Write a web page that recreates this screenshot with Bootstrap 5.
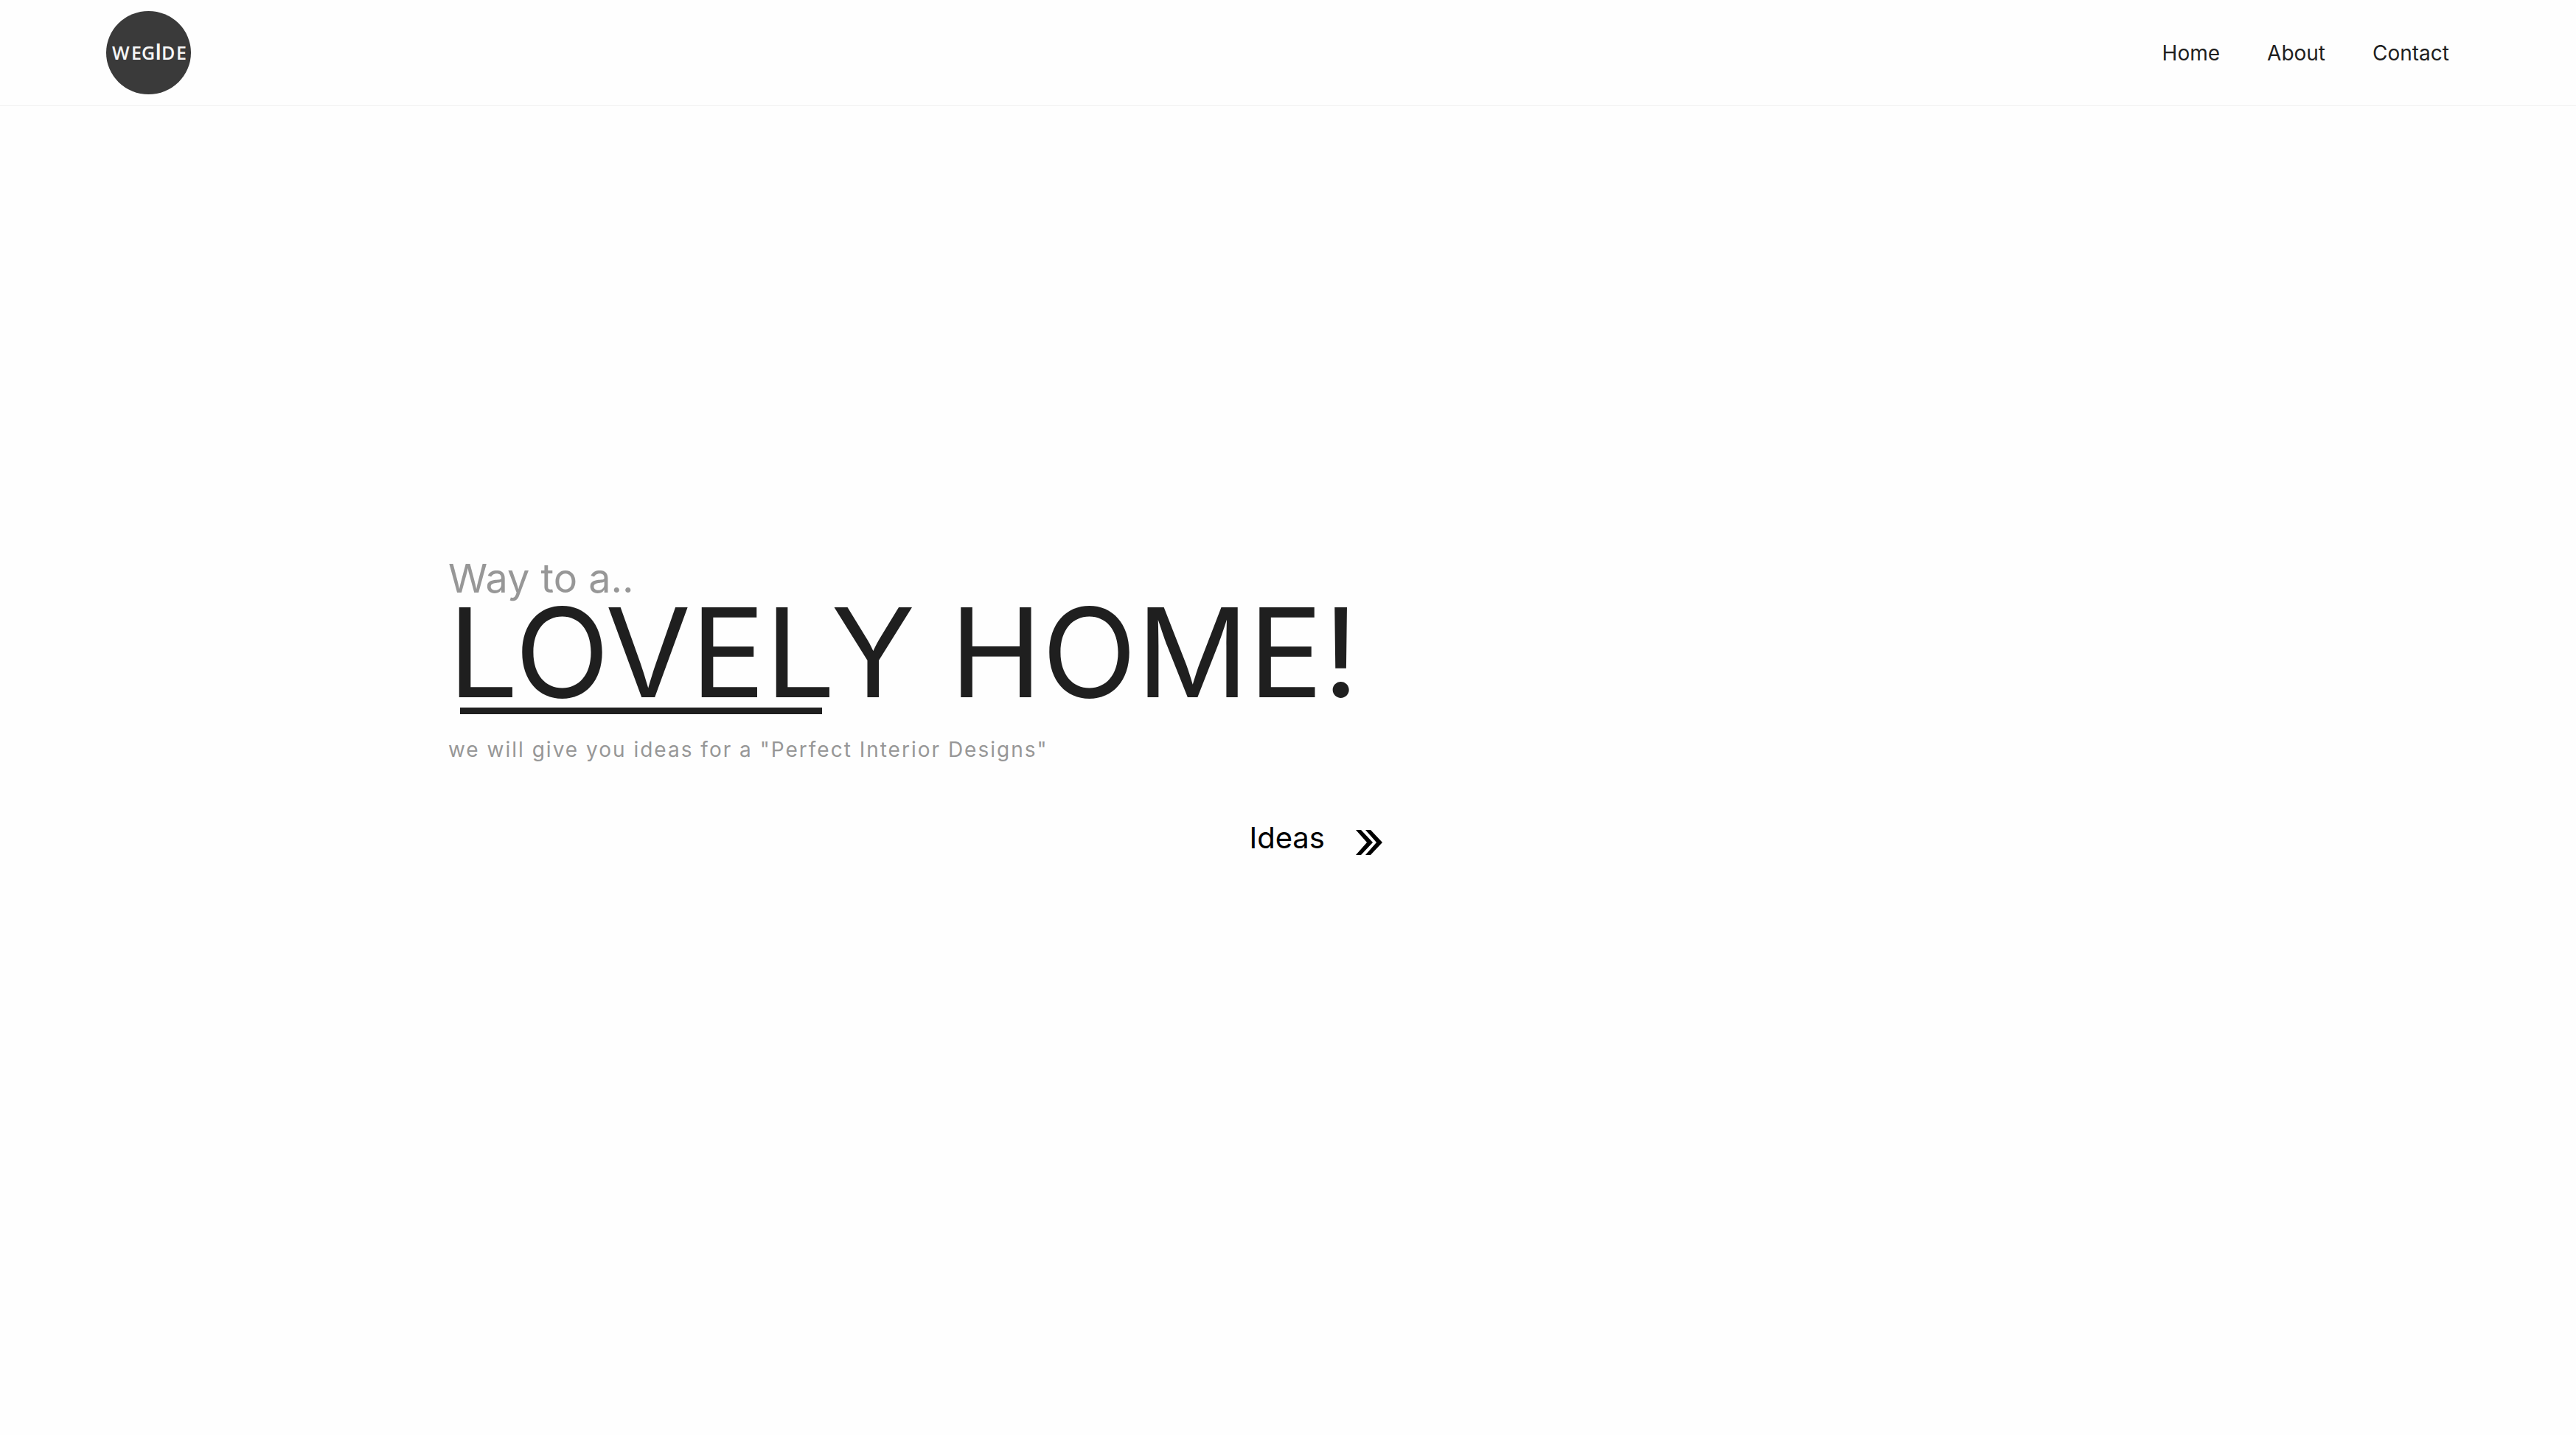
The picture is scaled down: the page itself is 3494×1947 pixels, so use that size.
<!DOCTYPE html>
<html lang="en">
<head>
<meta charset="utf-8">
<meta name="viewport" content="width=device-width, initial-scale=1">
<title>WEGIDE</title>
<link href="https://cdn.jsdelivr.net/npm/bootstrap@5.3.0/dist/css/bootstrap.min.css" rel="stylesheet">
<style>
  body { font-family: Inter, "Liberation Sans", sans-serif; color: #1f1f1f; background: #fefefe; }
  .site-bar { height: 144px; padding: 0 140px 0 144px; background: #fefefe; border-bottom: 1px solid #f0f0f0; }
  .site-bar .nav-link { padding: 0 32px; font-size: 28px; line-height: 40px; color: #1f1f1f; }
  .brand-logo { width: 115px; height: 113px; }
  .brand-logo text { font-family: "Open Sans", sans-serif; font-weight: 600; fill: #f6f6f6; }
  .hero { padding: 17.5vw 24px 48px 17.4vw; }
  .hero-copy { max-width: 1267px; }
  .hero-intro { font-size: 54px; line-height: 60px; color: #979797; }
  .hero-title { font-size: 168px; line-height: 140px; font-weight: 400; }
  .hero-rule { width: 491px; height: 9px; margin: 5px 0 28px 16px; background: #1f1f1f; }
  .hero-sub { font-size: 28px; line-height: 40px; letter-spacing: 2px; color: #979797; }
  .ideas-link { margin-top: 70px; gap: 42px; font-size: 40px; line-height: 60px; color: #000; }
  .ideas-link svg { width: 36px; height: 34px; margin-top: 12px; }
  @media (max-width: 1400px) {
    .hero-title { font-size: 72px; line-height: 80px; }
    .hero-rule { width: 200px; }
    .site-bar { padding: 0 24px; }
  }
</style>
<script src="https://cdn.jsdelivr.net/npm/bootstrap@5.3.0/dist/js/bootstrap.bundle.min.js"></script>
</head>
<body>
<header class="site-bar d-flex align-items-center justify-content-between">
  <a href="#" aria-label="WEGIDE" class="d-block lh-1">
    <svg class="brand-logo d-block" viewBox="0 0 115 113">
      <ellipse cx="57.5" cy="56.5" rx="57.5" ry="56.5" fill="#3a3a3a"/>
      <text x="8" y="66" font-size="25">W</text>
      <text x="34" y="66" font-size="25">E</text>
      <text x="48" y="66" font-size="25">G</text>
      <text x="66" y="66" font-size="31">I</text>
      <text x="75" y="66" font-size="25">D</text>
      <text x="95" y="66" font-size="25">E</text>
    </svg>
  </a>
  <nav class="nav" aria-label="Main">
    <a class="nav-link" href="#home">Home</a>
    <a class="nav-link" href="#about">About</a>
    <a class="nav-link" href="#contact">Contact</a>
  </nav>
</header>
<main class="hero" id="home">
  <div class="hero-copy">
    <p class="hero-intro mb-0">Way to a..</p>
    <h1 class="hero-title mb-0">LOVELY HOME!</h1>
    <div class="hero-rule"></div>
    <p class="hero-sub mb-0">we will give you ideas for a "Perfect Interior Designs"</p>
    <div class="d-flex justify-content-end">
      <a class="ideas-link d-flex align-items-center text-decoration-none" href="#ideas">Ideas
        <svg viewBox="0 0 36 34" aria-hidden="true"><path d="M0 0h7l16 17L7 34H0l15-17zM13 0h7l16 17-16 17h-7l15-17z"/></svg>
      </a>
    </div>
  </div>
</main>
</body>
</html>
